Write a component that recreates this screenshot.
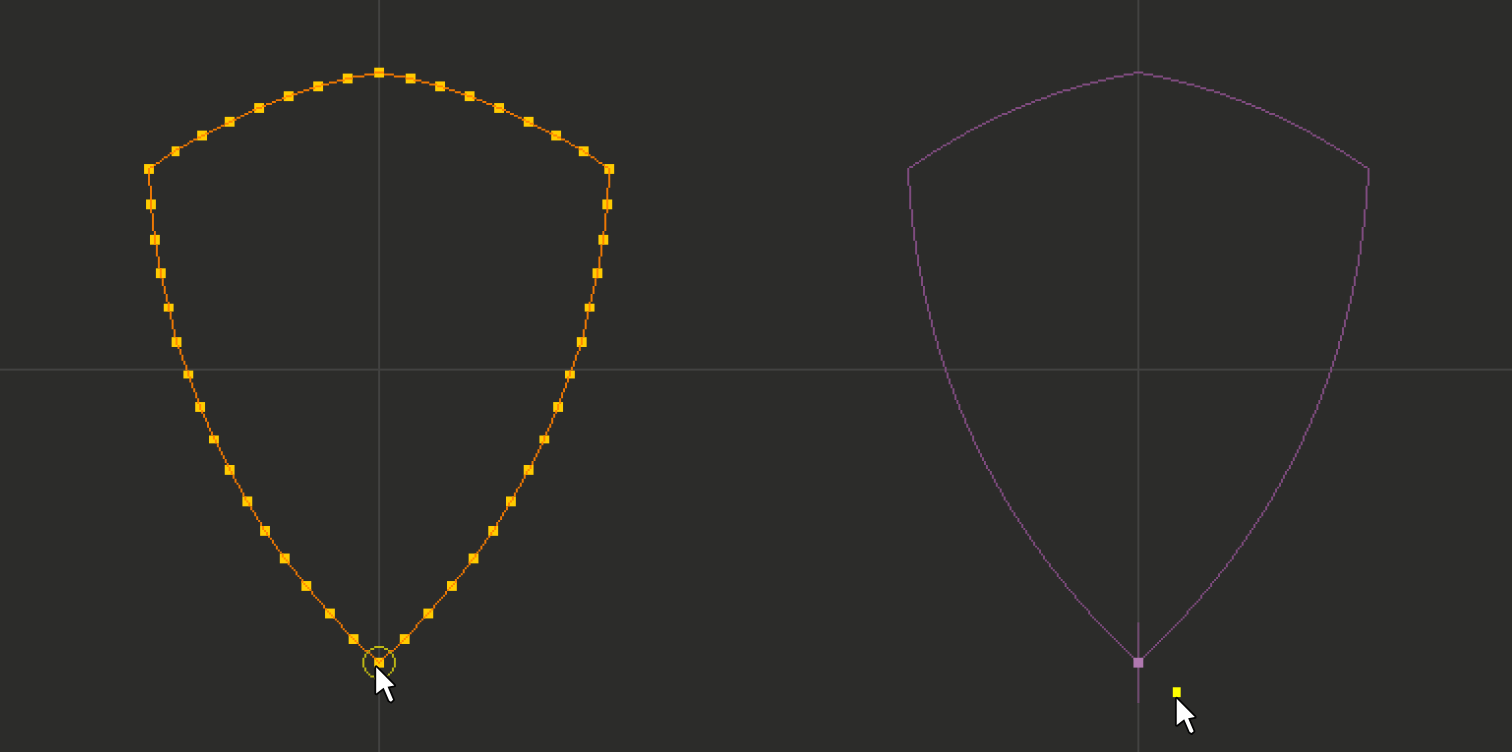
// Everything is drawn on a coarse pixel grid that the SVG scales up to the window.
// Half outline, from the top vertex counter-clockwise to the bottom one.
const HALF = [
  [192, 36], [176, 39], [161, 43], [146, 48], [131, 54], [116, 61], [102, 68], [88, 76],
  [75, 85], [76, 103], [78, 121], [81, 138], [85, 155], [89, 173], [95, 189], [101, 206],
  [108, 222], [116, 238], [125, 254], [134, 269], [144, 283], [155, 297], [167, 311],
  [179, 324], [192, 336],
];
const MIRROR = HALF.map(([x, y]) => [384 - x, y]);
const OUTLINE = [...HALF, ...MIRROR.slice(1, -1).reverse()];
const SHORT_ROWS = new Set([155, 189, 222]);
const OFFSET = 386;

const cell = (x, y) => `M${x} ${y}h1v1h-1z`;

function toPath(cells) {
  return [...new Set(cells.map(([x, y]) => cell(x, y)))].join("");
}

function segment([x0, y0], [x1, y1]) {
  const steps = Math.max(Math.abs(x1 - x0), Math.abs(y1 - y0));
  return Array.from({ length: steps + 1 }, (_, i) => [
    Math.round(x0 + ((x1 - x0) * i) / steps),
    Math.round(y0 + ((y1 - y0) * i) / steps),
  ]);
}

function ring(cx, cy, r) {
  const cells = [];
  for (let i = 0; i <= Math.round(r * Math.SQRT1_2); i++) {
    const j = Math.round(Math.sqrt(r * r - i * i));
    for (const [a, b] of [[i, j], [j, i]]) {
      cells.push([cx + a, cy + b], [cx - a, cy + b], [cx + a, cy - b], [cx - a, cy - b]);
    }
  }
  return cells;
}

const polyline = toPath(
  [HALF, MIRROR].flatMap((side) => side.slice(1).flatMap((p, i) => segment(side[i], p)))
);

// One cell for each step along the curve's major axis (0 = x, 1 = y).
function curveCells(a, b, c, axis) {
  const best = new Map();
  for (let i = 0; i <= 3000; i++) {
    const t = i / 3000;
    const p = [0, 1].map(
      (k) => (1 - t) * (1 - t) * a[k] + 2 * t * (1 - t) * b[k] + t * t * c[k]
    );
    const key = Math.round(p[axis]);
    const distance = Math.abs(p[axis] - key);
    if (!best.has(key) || best.get(key).distance > distance) {
      best.set(key, { distance, at: p.map(Math.round) });
    }
  }
  return [...best.values()].map(({ at }) => at);
}

const halfCurve = [
  ...curveCells([192, 36], [128.5, 47.5], [75, 85], 0),
  ...curveCells([75, 85], [82.5, 233.5], [192, 336], 1),
];
const curve = toPath(
  halfCurve.flatMap(([x, y]) => [[x + OFFSET, y], [384 - x + OFFSET, y]])
);

function Cursor({ x, y }) {
  return (
    <path
      transform={`translate(${x} ${y})`}
      d="M1 1.8V15.2L4.8 12.2L7.6 18.7L8.5 19.3L9.6 18.3L6.8 11.7L10.2 11.1Z"
      fill="#ffffff"
      stroke="#050505"
      strokeWidth="1.8"
      strokeLinejoin="round"
      paintOrder="stroke"
    />
  );
}

function Vertex({ x, y }) {
  const narrow = x === 88;
  const short = SHORT_ROWS.has(y);
  return (
    <rect
      x={narrow ? x - 1 : x - 2}
      y={short ? y - 1 : y - 2}
      width={narrow ? 4 : 5}
      height={short ? 4 : 5}
      fill="#ffcc00"
    />
  );
}

export default function App() {
  return (
    <main className="h-screen w-full overflow-hidden bg-[#2c2c2a]">
      <svg
        className="block h-full w-full"
        viewBox="-0.25 -0.45 768.7 382.4"
        preserveAspectRatio="xMidYMid slice"
        role="img"
        aria-label="Shield outline with vertices beside its curve"
      >
        <g fill="#424241">
          <rect x="-1" y="187" width="771" height="1" />
          <rect x="192" y="-1" width="1" height="385" />
          <rect x="578" y="-1" width="1" height="385" />
        </g>

        {OUTLINE.map(([x, y]) => (
          <Vertex key={`${x}-${y}`} x={x} y={y} />
        ))}
        <path d={polyline} fill="#ff7f00" fillOpacity="0.92" />
        <path d={toPath(ring(192, 336, 8))} fill="#dcd410" fillOpacity="0.82" />
        <Cursor x={190} y={337} />

        <path d={curve} fill="#7f4c7f" />
        <rect x="578" y="316" width="1" height="41" fill="#704a70" />
        <rect x="576" y="334" width="5" height="5" fill="#b078b0" />
        <rect x="596" y="349" width="4" height="5" fill="#ffff00" />
        <Cursor x={597} y={353} />
      </svg>
    </main>
  );
}
